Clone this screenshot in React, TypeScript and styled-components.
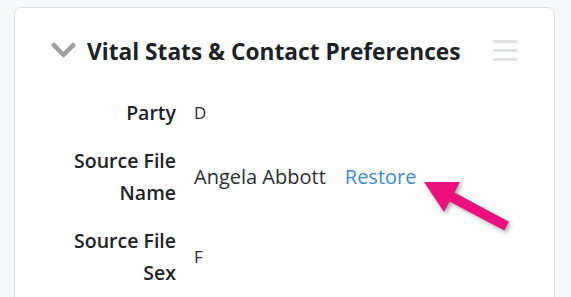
import React from "react";
import styled, { createGlobalStyle } from "styled-components";

const Global = createGlobalStyle`
  html, body { margin: 0; padding: 0; background: #f7f8fa; }
  body { font-family: "Open Sans", "Noto Sans", sans-serif; color: #212529; overflow: hidden; }
`;

const Page = styled.div`
  position: relative;
  width: 571px;
  height: 297px;
  padding: 7px 0 0 14px;
  box-sizing: border-box;
  overflow: hidden;
`;

const Card = styled.section`
  width: 541px;
  min-height: 320px;
  box-sizing: border-box;
  background: #fff;
  border: 1px solid #dfe1e5;
  border-radius: 7px;
`;

const Header = styled.header`
  display: flex;
  align-items: center;
  height: 40px;
  margin-top: 23px;
  padding: 0 37px 0 36px;
`;

const Chevron = styled.svg`
  width: 25px;
  height: 18px;
  flex: none;
  fill: #9e9e9e;
  margin-top: -2px;
`;

const Title = styled.h2`
  margin: 0 0 0 11px;
  font-size: 22.7px;
  font-weight: 700;
  color: #1e2227;
  flex: 1;
  white-space: nowrap;
`;

const Menu = styled.div`
  display: flex;
  flex-direction: column;
  gap: 6px;
  width: 24px;
  margin-top: -2px;
`;

const Bar = styled.span`
  display: block;
  height: 3px;
  background: #e1e2e5;
`;

const Rows = styled.div`
  display: grid;
  grid-template-columns: 120px 1fr;
  column-gap: 18px;
  row-gap: 15px;
  margin-top: 26px;
  padding-left: 41px;
`;

const Label = styled.div`
  text-align: right;
  font-size: 19.5px;
  font-weight: 600;
  line-height: 32.5px;
  color: #1e2227;
`;

const Value = styled.div<{ $large?: boolean }>`
  display: flex;
  align-items: center;
  gap: 19px;
  font-size: ${(p) => (p.$large ? "20px" : "17px")};
  line-height: 32px;
  color: #2a2e33;
`;

const Link = styled.a`
  color: #3d8ad8;
  text-decoration: none;
  cursor: pointer;
`;

const Pointer = styled.svg`
  position: absolute;
  left: 0;
  top: 0;
  width: 571px;
  height: 297px;
  pointer-events: none;
  filter: drop-shadow(2px 2px 2px rgba(0, 0, 0, 0.35));
`;

export default function App() {
  return (
    <>
      <Global />
      <Page>
        <Card>
          <Header>
            <Chevron viewBox="0 115 448 280">
              <path d="M207.029 381.476L12.686 187.132c-9.373-9.373-9.373-24.569 0-33.941l22.667-22.667c9.357-9.357 24.522-9.375 33.901-.04L224 284.505l154.745-154.021c9.379-9.335 24.544-9.317 33.901.04l22.667 22.667c9.373 9.373 9.373 24.569 0 33.941L240.971 381.476c-9.373 9.372-24.569 9.372-33.942 0z" />
            </Chevron>
            <Title>Vital Stats &amp; Contact Preferences</Title>
            <Menu>
              <Bar />
              <Bar />
              <Bar />
            </Menu>
          </Header>
          <Rows>
            <Label>Party</Label>
            <Value>D</Value>
            <Label>Source File Name</Label>
            <Value $large>
              <span>Angela Abbott</span>
              <Link>Restore</Link>
            </Value>
            <Label>Source File Sex</Label>
            <Value>F</Value>
          </Rows>
        </Card>
        <Pointer viewBox="0 0 571 297">
          <polygon
            fill="#ec0f7f"
            points="424,182 460,182 454.4,192.6 509,221.8 504.3,230.6 449.6,201.4 444,212"
          />
        </Pointer>
      </Page>
    </>
  );
}
